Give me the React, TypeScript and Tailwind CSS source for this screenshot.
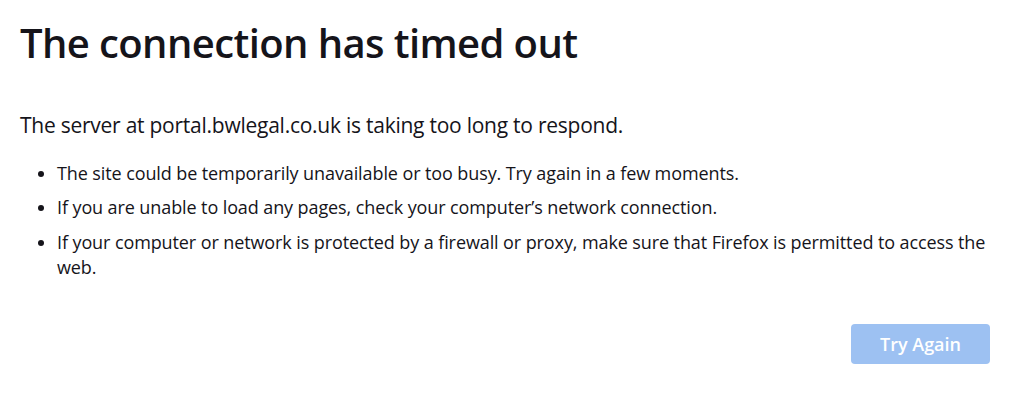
export default function App() {
  return (
    <div className="w-[1036px] h-[412px] bg-white text-[#15141a] font-['Open_Sans',sans-serif] pl-[20px] pr-[46px]">
      <h1 className="pt-[17px] text-[40px] leading-[52px] font-semibold tracking-[-0.6px]">The connection has timed out</h1>
      <p className="mt-[42px] text-[21px] leading-[28px] tracking-[-0.25px]">The server at portal.bwlegal.co.uk is taking too long to respond.</p>
      <ul className="mt-[21.5px] list-disc pl-[37px] text-[18px] leading-[25px] tracking-[-0.1px]">
        <li className="mb-[9.5px]">The site could be temporarily unavailable or too busy. Try again in a few moments.</li>
        <li className="mb-[9.5px]">If you are unable to load any pages, check your computer’s network connection.</li>
        <li>If your computer or network is protected by a firewall or proxy, make sure that Firefox is permitted to access the web.</li>
      </ul>
      <div className="flex justify-end mt-[44.5px]">
        <button className="w-[139px] h-[40px] rounded-[4px] bg-[#9dc1f2] text-white text-[18px] font-semibold">Try Again</button>
      </div>
    </div>
  );
}
